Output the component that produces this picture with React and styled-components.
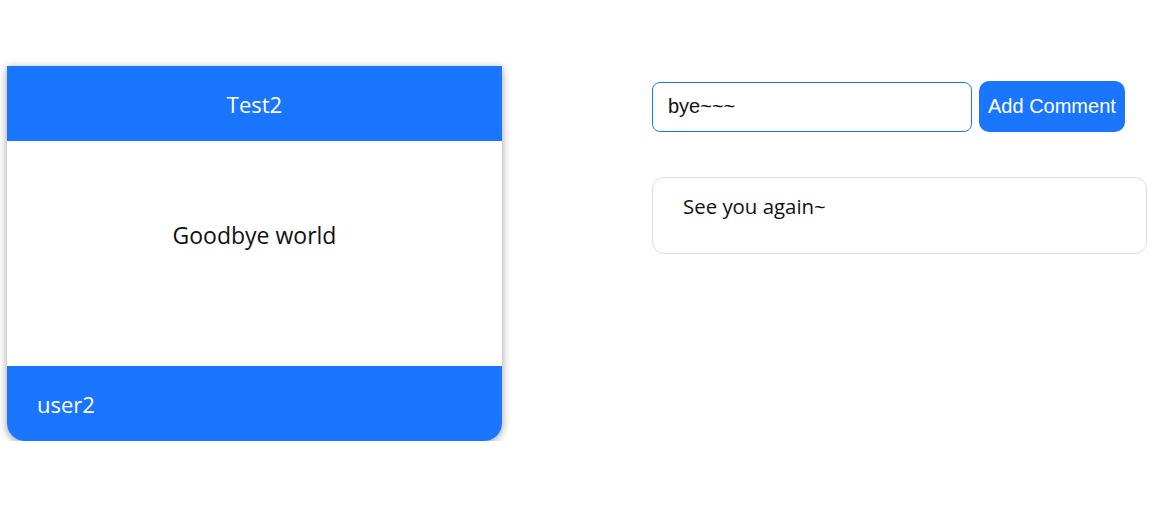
import React from "react";
import styled, { createGlobalStyle } from "styled-components";

const GlobalStyle = createGlobalStyle`
  html, body {
    margin: 0;
    padding: 0;
    background: #fff;
  }
  body {
    font-family: "Open Sans", "Noto Sans", sans-serif;
  }
`;

const Page = styled.div`
  display: flex;
  align-items: flex-start;
  gap: 150px;
  padding: 66px 6px 0 7px;
`;

const Card = styled.div`
  width: 495px;
  flex-shrink: 0;
  background: #fff;
  border-radius: 0 0 18px 18px;
  box-shadow: 0 2px 8px rgba(0, 0, 0, 0.4);
  overflow: hidden;
  display: flex;
  flex-direction: column;
`;

const CardBar = styled.div`
  height: 75px;
  background: #1b76ff;
  color: #fff;
  font-size: 22px;
  display: flex;
  align-items: center;
  justify-content: ${({ $align }) => ($align === "left" ? "flex-start" : "center")};
  padding: 0 30px;
  box-sizing: border-box;
`;

const CardBody = styled.div`
  height: 225px;
  display: flex;
  align-items: center;
  justify-content: center;
  font-size: 23px;
  color: #111;
  padding-bottom: 37px;
  box-sizing: border-box;
`;

const Side = styled.div`
  flex: 1;
  display: flex;
  flex-direction: column;
  gap: 45px;
  padding-top: 15px;
`;

const Form = styled.form`
  display: flex;
  align-items: center;
  gap: 7px;
`;

const Input = styled.input`
  width: 320px;
  height: 50px;
  box-sizing: border-box;
  border: 1px solid #1b76ff;
  border-radius: 8px;
  padding: 0 15px;
  font-family: "Liberation Sans", Arial, sans-serif;
  font-size: 20px;
  color: #111;
  outline: none;
`;

const Button = styled.button`
  height: 51px;
  padding: 0 9px;
  border: none;
  border-radius: 10px;
  background: #1b76ff;
  color: #fff;
  font-family: "Liberation Sans", Arial, sans-serif;
  font-size: 20px;
  cursor: pointer;
`;

const Comment = styled.div`
  width: 495px;
  height: 77px;
  box-sizing: border-box;
  border: 1px solid #ddd;
  border-radius: 12px;
  padding: 14px 30px;
  font-size: 20.4px;
  color: #111;
`;

export default function App() {
  return (
    <>
      <GlobalStyle />
      <Page>
        <Card>
          <CardBar>Test2</CardBar>
          <CardBody>Goodbye world</CardBody>
          <CardBar $align="left">user2</CardBar>
        </Card>
        <Side>
          <Form onSubmit={(e) => e.preventDefault()}>
            <Input defaultValue="bye~~~" />
            <Button type="submit">Add Comment</Button>
          </Form>
          <Comment>See you again~</Comment>
        </Side>
      </Page>
    </>
  );
}
